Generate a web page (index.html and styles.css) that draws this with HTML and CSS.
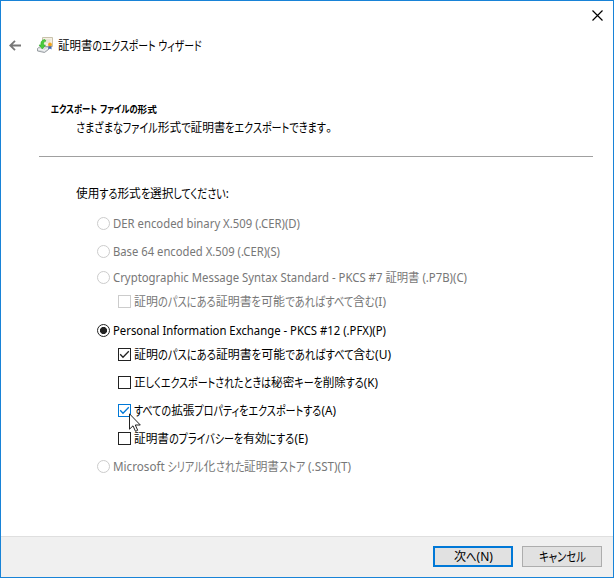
FILE: index.html
```html
<!DOCTYPE html>
<html lang="ja">
<head>
<meta charset="utf-8">
<title>証明書のエクスポート ウィザード</title>
<link rel="stylesheet" href="styles.css">
</head>
<body>
<div class="window">
  <header class="titlebar">
    <div class="closebar">
      <svg class="close" width="11" height="11" viewBox="0 0 11 11"><path d="M.5 .5l10 10M10.5 .5l-10 10" stroke="#000" stroke-width="1.2" fill="none"/></svg>
    </div>
    <div class="heading">
      <svg class="back" width="12" height="11" viewBox="0 0 12 11"><path d="M6 .8L1.2 5.5 6 10.2M1.2 5.5H12" stroke="#777" stroke-width="1.8" fill="none"/></svg>
      <svg class="app-icon" width="16" height="16" viewBox="0 0 16 16">
        <path d="M5.5.5h10v9h-10z" fill="#f5f0e2" stroke="#c9c2ac"/>
        <path d="M7.5 3h6M8 5h5" stroke="#dcd8c8"/>
        <path d="M.5 11.5L4 9l7.500 1v2.500L7.500 15.500.5 14z" fill="#d9dde0" stroke="#868b90" stroke-width=".8"/>
        <path d="M1 12l6.500 1.500L11 11" fill="none" stroke="#f8f8f8"/>
        <path d="M7.800 2.500C4.500 3 3.600 5 4 8H2l3.300 4L8.500 8H6.600C6.300 6 7 4.500 9 4z" fill="#48cc3b" stroke="#2faa2a" stroke-width=".6"/>
        <path d="M11.500 8.500v4l1.500-1 1.500 1v-4z" fill="#3c67b5"/>
        <circle cx="13" cy="7.500" r="1.900" fill="#f2a51c"/>
      </svg>
      <span class="fit" data-width="144">証明書のエクスポート ウィザード</span>
    </div>
  </header>
  <main>
    <section class="intro">
      <h1><span class="fit" data-width="106">エクスポート ファイルの形式</span></h1>
      <p><span class="fit" data-width="256">さまざまなファイル形式で証明書をエクスポートできます。</span></p>
    </section>
    <section class="formats">
      <p class="prompt"><span class="fit" data-width="153">使用する形式を選択してください:</span></p>
      <div class="option off"><i class="radio"></i><span class="fit" data-width="187">DER encoded binary X.509 (.CER)(D)</span></div>
      <div class="option off gap-15"><i class="radio"></i><span class="fit" data-width="167">Base 64 encoded X.509 (.CER)(S)</span></div>
      <div class="option off gap-13"><i class="radio"></i><span class="fit" data-width="354">Cryptographic Message Syntax Standard - PKCS #7 証明書 (.P7B)(C)</span></div>
      <div class="option sub off gap-11"><i class="check"></i><span class="fit" data-width="252">証明のパスにある証明書を可能であればすべて含む(I)</span></div>
      <div class="option gap-16"><i class="radio selected"></i><span class="fit" data-width="273">Personal Information Exchange - PKCS #12 (.PFX)(P)</span></div>
      <div class="option sub gap-11"><i class="check"><svg viewBox="0 0 11 11"><path d="M1.200 5.300L4 8.200 9.800 2.300"/></svg></i><span class="fit" data-width="257">証明のパスにある証明書を可能であればすべて含む(U)</span></div>
      <div class="option sub gap-15"><i class="check"></i><span class="fit" data-width="244">正しくエクスポートされたときは秘密キーを削除する(K)</span></div>
      <div class="option sub gap-15"><i class="check hot"><svg viewBox="0 0 11 11"><path d="M1.200 5.300L4 8.200 9.800 2.300"/></svg>
        <svg class="cursor" viewBox="0 0 12 19"><path d="M.5.8v15.400l3.500-3.400 2.500 5.500 2.200-1-2.400-5.300h5z"/></svg></i><span class="fit" data-width="202">すべての拡張プロパティをエクスポートする(A)</span></div>
      <div class="option sub gap-15"><i class="check"></i><span class="fit" data-width="174">証明書のプライバシーを有効にする(E)</span></div>
      <div class="option off gap-15"><i class="radio"></i><span class="fit" data-width="238">Microsoft シリアル化された証明書ストア (.SST)(T)</span></div>
    </section>
  </main>
  <footer>
    <button class="primary"><span class="fit" data-width="39">次へ(N)</span></button>
    <button><span class="fit" data-width="47">キャンセル</span></button>
  </footer>
</div>
<script src="script.js"></script>
</body>
</html>
```
FILE: styles.css
```css
* { box-sizing: border-box; }
body {
  margin: 0;
  background: #fff;
  color: #000;
  font: 12px/16px "Noto Sans", "Noto Sans CJK JP", sans-serif;
}
.window {
  width: 614px;
  height: 578px;
  display: flex;
  flex-direction: column;
  border: 1px solid #1883d7;
}
.closebar {
  height: 29px;
  display: flex;
  justify-content: flex-end;
  padding: 9px 10px 0 0;
}
.heading {
  display: flex;
  align-items: center;
  height: 30px;
  padding-left: 8px;
}
.heading .fit { padding-top: 2px; }
.app-icon { margin: 0 5px 0 16px; }
svg { flex: none; display: block; }
.fit {
  display: inline-block;
  white-space: nowrap;
  transform-origin: 0 50%;
  font-feature-settings: "palt";
}
.kana {
  display: inline-block;
  white-space: pre;
  transform-origin: 0 50%;
}
main { flex: 1; }
.intro {
  margin: 0 20px 0 38px;
  height: 97px;
  padding: 42px 0 0 12px;
  border-bottom: 1px solid #a0a0a0;
}
h1, p { margin: 0; }
h1 {
  font-size: 9.500px;
  line-height: 16px;
  font-weight: 600;
}
.intro p { padding: 2px 0 0 25px; }
.formats { padding: 29px 0 0 96px; }
.prompt { margin: 0 0 15px -21px; }
.option {
  display: flex;
  align-items: center;
  gap: 3px;
  height: 13px;
}
.sub { padding-left: 21px; }
.off { color: #777; }
.gap-11 { margin-top: 11px; }
.gap-13 { margin-top: 13px; }
.gap-15 { margin-top: 15px; }
.gap-16 { margin-top: 16px; }
.radio, .check {
  flex: none;
  position: relative;
  width: 13px;
  height: 13px;
  border: 1px solid #222;
  background: #fff;
}
.radio { border-radius: 50%; }
.off .radio, .off .check { border-color: #ccc; }
.selected { background: radial-gradient(circle, #222 3.200px, #fff 3.900px); }
.check path { fill: none; stroke: #222; stroke-width: 1.300; }
.check.hot { border-color: #0078d7; }
.hot path { stroke: #0078d7; }
.check .cursor {
  position: absolute;
  left: 10px;
  top: 8px;
  width: 12px;
  height: 19px;
  z-index: 2;
}
.check .cursor path { fill: #fff; stroke: #222; stroke-width: 1; }
footer {
  height: 41px;
  display: flex;
  justify-content: flex-end;
  gap: 9px;
  padding: 9px 11px 0 0;
  background: #f0f0f0;
  border-top: 1px solid #dfdfdf;
}
button {
  width: 80px;
  height: 21px;
  padding: 0;
  display: flex;
  align-items: center;
  justify-content: center;
  border: 1px solid #adadad;
  background: #e1e1e1;
  color: #000;
  font: inherit;
}
button.primary { border: 2px solid #0078d7; }
```
FILE: script.js
```js
// Sets kana narrower than kanji, then fits each line to its width.
const KANA_SCALE = 0.86;
const KANA_HEIGHT = 1.07;

document.querySelectorAll('.fit').forEach((line) => {
  const parts = line.textContent.split(/([\u3040-\u30ff]+)/);
  line.textContent = '';
  parts.filter(Boolean).forEach((part) => {
    if (!/[\u3040-\u30ff]/.test(part)) {
      line.append(part);
      return;
    }
    const kana = document.createElement('span');
    kana.className = 'kana';
    kana.textContent = part;
    line.append(kana);
    kana.style.width = kana.getBoundingClientRect().width * KANA_SCALE + 'px';
    kana.style.transform = `scale(${KANA_SCALE}, ${KANA_HEIGHT})`;
  });
  const natural = line.getBoundingClientRect().width;
  const target = Number(line.dataset.width);
  line.style.transform = `scaleX(${target / natural})`;
  line.style.width = natural + 'px';
  line.style.marginRight = target - natural + 'px';
});
```
